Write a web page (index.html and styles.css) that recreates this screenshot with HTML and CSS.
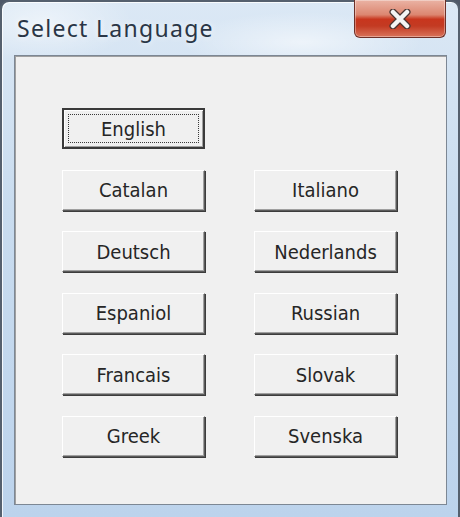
FILE: index.html
```html
<!DOCTYPE html>
<html lang="en">
<head>
  <meta charset="UTF-8" />
  <meta name="viewport" content="width=device-width, initial-scale=1.0" />
  <title>Select Language</title>
  <link rel="stylesheet" href="styles.css">
</head>

<body>
  <div class="window">
    <div class="titlebar">
      <span class="title">Select Language</span>
      <button class="close" type="button" aria-label="Close">
        <svg width="24" height="20" viewBox="0 0 24 20">
          <path d="M5 3 L19 17 M19 3 L5 17" stroke="#4a3532" stroke-width="7" stroke-linecap="round" />
          <path d="M5 3 L19 17 M19 3 L5 17" stroke="#f4f4f4" stroke-width="4.5" stroke-linecap="round" />
        </svg>
      </button>
    </div>

    <div class="client">
      <div class="languages">
        <button class="lang focused" type="button"><span>English</span></button>
        <span></span>
        <button class="lang" type="button"><span>Catalan</span></button>
        <button class="lang" type="button"><span>Italiano</span></button>
        <button class="lang" type="button"><span>Deutsch</span></button>
        <button class="lang" type="button"><span>Nederlands</span></button>
        <button class="lang" type="button"><span>Espaniol</span></button>
        <button class="lang" type="button"><span>Russian</span></button>
        <button class="lang" type="button"><span>Francais</span></button>
        <button class="lang" type="button"><span>Slovak</span></button>
        <button class="lang" type="button"><span>Greek</span></button>
        <button class="lang" type="button"><span>Svenska</span></button>
      </div>
    </div>
  </div>
</body>
</html>
```

FILE: styles.css
```css
html, body {
  margin: 0;
  height: 100%;
}

body {
  background: #4e5868;
  overflow: hidden;
}

.window {
  box-sizing: border-box;
  width: 460px;
  height: 517px;
  display: flex;
  flex-direction: column;
  border: 2px solid #55606e;
  border-bottom: none;
  border-radius: 9px 9px 0 0;
  background:
    radial-gradient(ellipse 120px 30px at 300px 40px, rgba(255, 255, 255, 0.55), transparent),
    radial-gradient(ellipse 90px 40px at 40px 20px, rgba(255, 255, 255, 0.5), transparent),
    linear-gradient(180deg, #dbe8f5 0%, #c9dcef 40%, #bcd3ec 100%);
  box-shadow: inset 1px 1px 0 rgba(255, 255, 255, 0.8);
}

.titlebar {
  height: 53px;
  display: flex;
  justify-content: space-between;
  align-items: flex-start;
}

.title {
  font-family: "Noto Sans", sans-serif;
  font-size: 23px;
  letter-spacing: 1.3px;
  color: #2a3646;
  padding: 10px 0 0 15px;
  text-shadow: 0 0 6px rgba(255, 255, 255, 0.9);
}

.close {
  width: 92px;
  height: 38px;
  margin: -2px 12px 0 0;
  padding: 0;
  display: flex;
  align-items: center;
  justify-content: center;
  border: 1px solid #6e3028;
  border-top: none;
  border-radius: 0 0 6px 6px;
  background: linear-gradient(180deg, #eab3a4 0%, #dc8670 40%, #c8361e 52%, #c33a22 70%, #d9735a 100%);
  box-shadow: inset 0 0 0 1px rgba(255, 255, 255, 0.35);
}

.client {
  flex: 1;
  margin: 0 11px 12px 12px;
  background: #f0f0f0;
  border: 1px solid #7c8794;
  box-shadow: inset 1px 1px 0 #a0a0a0;
  padding: 52px 0 0 47px;
}

.languages {
  display: grid;
  grid-template-columns: 143px 143px;
  grid-auto-rows: 41px;
  column-gap: 49px;
  row-gap: 20.5px;
}

.lang {
  margin: 0;
  padding: 0;
  font-family: "DejaVu Sans Condensed", "DejaVu Sans", sans-serif;
  font-stretch: condensed;
  font-size: 20px;
  color: #262626;
  background: #f0f0f0;
  border: 1px solid;
  border-color: #ffffff #5a5a5a #5a5a5a #ffffff;
  box-shadow: inset -1px -1px 0 #a0a0a0, 1px 1px 0 #3c3c3c;
}

.lang.focused {
  border: 2px solid #3a3a3a;
  box-shadow: inset 1px 1px 0 #ffffff, inset -1px -1px 0 #a0a0a0;
  display: flex;
  padding: 4px;
}

.lang.focused span {
  flex: 1;
  display: flex;
  align-items: center;
  justify-content: center;
  border: 1px dotted #3a3a3a;
}
```
